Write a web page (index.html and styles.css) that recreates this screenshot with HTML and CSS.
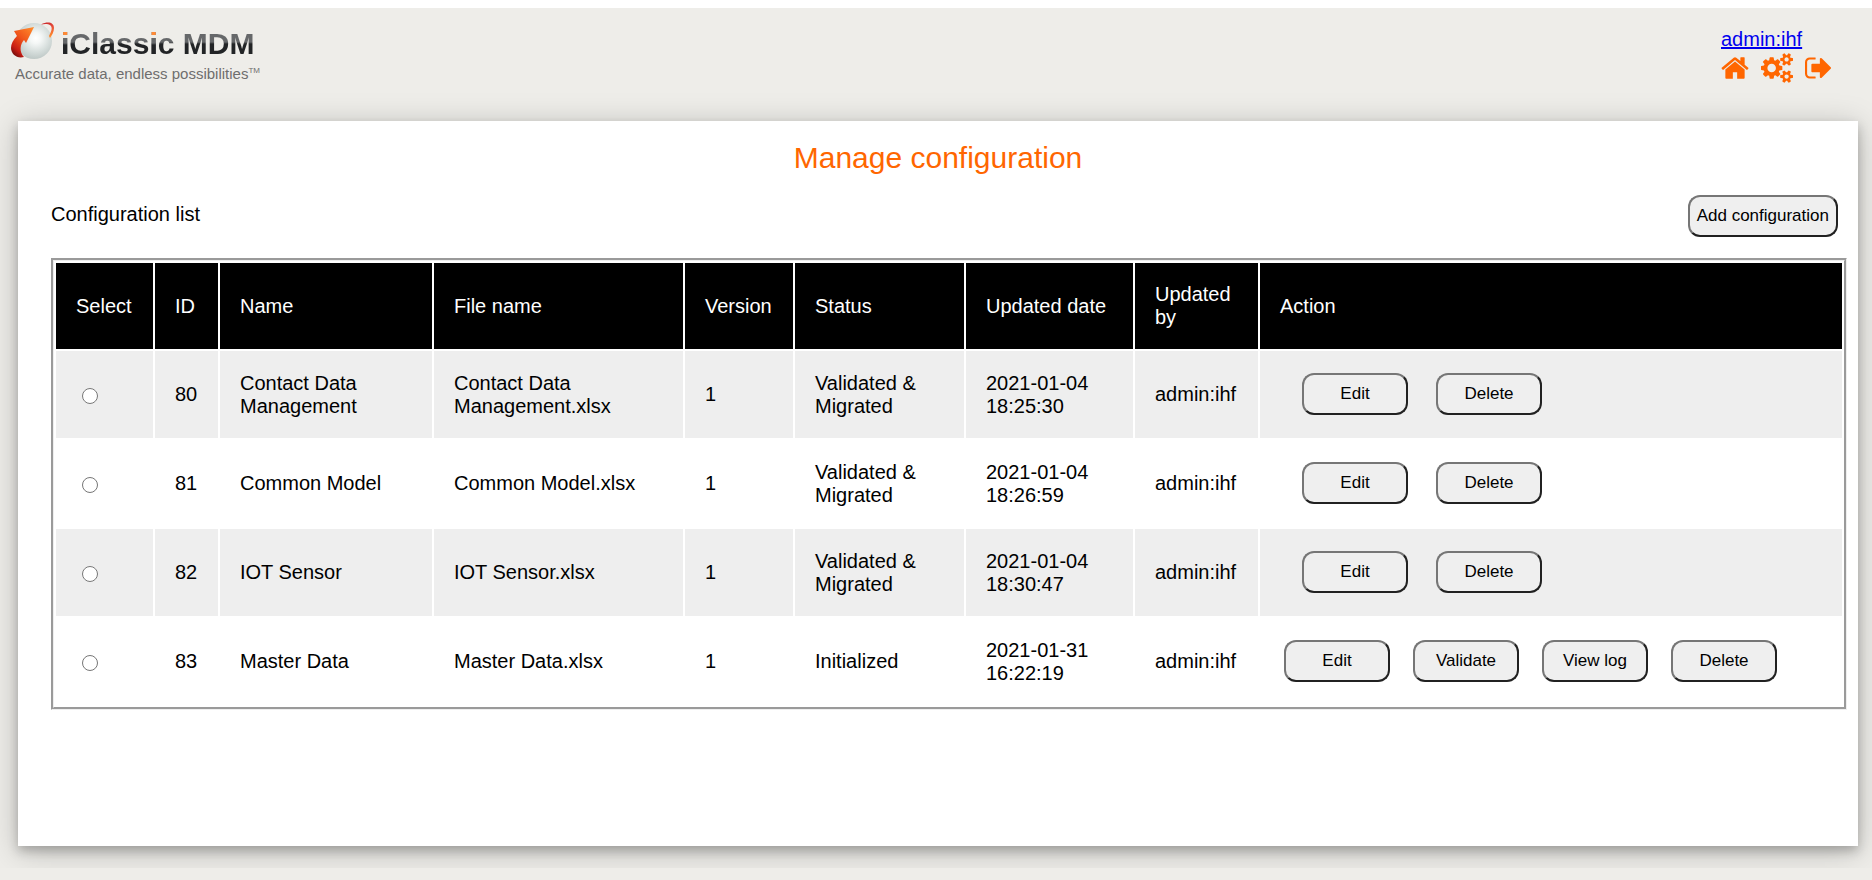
FILE: index.html
```html
<!DOCTYPE html>
<html lang="en">
<head>
<meta charset="utf-8">
<title>iClassic MDM - Manage configuration</title>
<link rel="stylesheet" href="styles.css">
</head>
<body>
<div class="page">
  <header class="topbar">
    <div class="brand">
      <div class="brand-main">
        <svg class="brand-globe" viewBox="0 0 44 40" aria-hidden="true">
          <defs>
            <radialGradient id="ball" cx="0.55" cy="0.42" r="0.6">
              <stop offset="0" stop-color="#ffffff"/>
              <stop offset="0.25" stop-color="#f4f7f6"/>
              <stop offset="0.65" stop-color="#d5dddb"/>
              <stop offset="1" stop-color="#bcc6c4"/>
            </radialGradient>
            <linearGradient id="arrow" x1="0.9" y1="0" x2="0.2" y2="1">
              <stop offset="0" stop-color="#ff8a2a"/>
              <stop offset="0.45" stop-color="#f0541a"/>
              <stop offset="0.8" stop-color="#c81d14"/>
              <stop offset="1" stop-color="#6e0c0c"/>
            </linearGradient>
            <linearGradient id="tail" x1="0" y1="0" x2="0.3" y2="1">
              <stop offset="0" stop-color="#c5202a"/>
              <stop offset="0.5" stop-color="#e8503a"/>
              <stop offset="1" stop-color="#ff8a2a"/>
            </linearGradient>
          </defs>
          <circle cx="23" cy="21" r="18" fill="url(#ball)"/>
          <path d="M30 4.500C37 1 43 2.500 43 8C43 12 41 15 39 18L38 16C40 12 42 8 39.500 5.500C37 3.500 33 4 30 4.500Z" fill="url(#tail)"/>
          <path d="M23 7L15 23L13 20C9 24 8 32 13 37C6 39 0 34 0 28C0 24 2 20 6 16L3 11Z" fill="url(#arrow)"/>
        </svg>
        <span class="brand-name"><span class="dotted">i</span>Class<span class="dotted">i</span>c MDM</span>
      </div>
      <div class="brand-tagline">Accurate data, endless possibilities<sup class="brand-tm">TM</sup></div>
    </div>
    <nav class="user-nav" aria-label="User">
      <a class="user-link" href="#">admin:ihf</a>
      <div class="user-icons">
        <a class="icon-link" href="#" aria-label="Home"><svg class="icon icon-home" viewBox="89 0 1614 1792"><path d="M1472 992v480q0 26-19 45t-45 19h-384v-384h-256v384h-384q-26 0-45-19t-19-45v-480q0-1 .5-3t.5-3l575-474 575 474q1 2 1 6zm223-69l-62 74q-8 9-21 11h-3q-13 0-21-7l-692-577-692 577q-12 8-24 7-13-2-21-11l-62-74q-8-10-7-23.500t11-21.500l719-599q32-26 76-26t76 26l244 204v-195q0-14 9-23t23-9h192q14 0 23 9t9 23v408l219 182q10 8 11 21.500t-7 23.500z"/></svg></a>
        <a class="icon-link" href="#" aria-label="Settings"><svg class="icon icon-cogs" viewBox="-64 0 1920 1792"><path d="M832 896q0-106-75-181t-181-75-181 75-75 181 75 181 181 75 181-75 75-181zm768 512q0-52-38-90t-90-38-90 38-38 90q0 53 37.500 90.500t90.500 37.500 90.500-37.500 37.500-90.500zm0-1024q0-52-38-90t-90-38-90 38-38 90q0 53 37.500 90.500t90.500 37.500 90.500-37.500 37.500-90.500zm-384 421v185q0 10-7 19.500t-16 10.500l-155 24q-11 35-32 76 34 48 90 115 7 11 7 20 0 12-7 19-23 30-82.500 89.500t-78.500 59.500q-11 0-21-7l-115-90q-37 19-77 31-11 108-23 155-7 24-30 24h-186q-11 0-20-7.500t-10-17.500l-23-153q-34-10-75-31l-118 89q-7 7-20 7-11 0-21-8-144-133-144-160 0-9 7-19 10-14 41-53t47-61q-23-44-35-82l-152-24q-10-1-17-9.500t-7-19.500v-185q0-10 7-19.500t16-10.500l155-24q11-35 32-76-34-48-90-115-7-11-7-20 0-12 7-20 22-30 82-89t79-59q11 0 21 7l115 90q34-18 77-32 11-108 23-154 7-24 30-24h186q11 0 20 7.500t10 17.500l23 153q34 10 75 31l118-89q8-7 20-7 11 0 21 8 144 133 144 160 0 8-7 19-12 16-42 54t-45 60q23 48 34 82l152 23q10 2 17 10.500t7 19.500zm640 533v140q0 16-149 31-12 27-30 52 51 113 51 138 0 4-4 7-122 71-124 71-8 0-46-47t-52-68q-20 2-30 2t-30-2q-14 21-52 68t-46 47q-2 0-124-71-4-3-4-7 0-25 51-138-18-25-30-52-149-15-149-31v-140q0-16 149-31 13-29 30-52-51-113-51-138 0-4 4-7 4-2 35-20t59-34 30-16q8 0 46 46.500t52 67.500q20-2 30-2t30 2q51-71 92-112l6-2q4 0 124 70 4 3 4 7 0 25-51 138 17 23 30 52 149 15 149 31zm0-1024v140q0 16-149 31-12 27-30 52 51 113 51 138 0 4-4 7-122 71-124 71-8 0-46-47t-52-68q-20 2-30 2t-30-2q-14 21-52 68t-46 47q-2 0-124-71-4-3-4-7 0-25 51-138-18-25-30-52-149-15-149-31v-140q0-16 149-31 13-29 30-52-51-113-51-138 0-4 4-7 4-2 35-20t59-34 30-16q8 0 46 46.500t52 67.500q20-2 30-2t30 2q51-71 92-112l6-2q4 0 124 70 4 3 4 7 0 25-51 138 17 23 30 52 149 15 149 31z"/></svg></a>
        <a class="icon-link" href="#" aria-label="Sign out"><svg class="icon icon-out" viewBox="64 0 1568 1792"><path d="M704 1440q0 4 1 20t.5 26.500-3 23.500-10 19.500-20.500 6.500h-320q-119 0-203.500-84.500t-84.500-203.500v-704q0-119 84.500-203.500t203.500-84.500h320q13 0 22.500 9.500t9.500 22.500q0 4 1 20t.5 26.500-3 23.500-10 19.500-20.500 6.500h-320q-66 0-113 47t-47 113v704q0 66 47 113t113 47h312l11.500 1 11.500 3 8 5.500 7 9 2 13.500zm928-544q0 26-19 45l-544 544q-19 19-45 19t-45-19-19-45v-288h-448q-26 0-45-19t-19-45v-384q0-26 19-45t45-19h448v-288q0-26 19-45t45-19 45 19l544 544q19 19 19 45z"/></svg></a>
      </div>
    </nav>
  </header>
  <main class="card">
    <h1 class="title">Manage configuration</h1>
    <div class="list-head">
      <h2 class="list-title" id="list-title">Configuration list</h2>
      <button class="btn" type="button">Add configuration</button>
    </div>
    <table class="grid" aria-labelledby="list-title">
      <colgroup>
        <col class="col-select"><col class="col-id"><col class="col-name"><col class="col-file"><col class="col-version"><col class="col-status"><col class="col-date"><col class="col-by"><col>
      </colgroup>
      <thead>
        <tr><th>Select</th><th>ID</th><th>Name</th><th>File name</th><th>Version</th><th>Status</th><th>Updated date</th><th>Updated by</th><th>Action</th></tr>
      </thead>
      <tbody>
        <tr>
          <td><input class="pick" type="radio" name="config" aria-label="Select Contact Data Management"></td>
          <td>80</td><td>Contact Data Management</td><td>Contact Data Management.xlsx</td><td>1</td><td>Validated &amp; Migrated</td><td>2021-01-04 18:25:30</td><td>admin:ihf</td>
          <td><div class="actions"><button class="btn btn-action" type="button">Edit</button><button class="btn btn-action" type="button">Delete</button></div></td>
        </tr>
        <tr>
          <td><input class="pick" type="radio" name="config" aria-label="Select Common Model"></td>
          <td>81</td><td>Common Model</td><td>Common Model.xlsx</td><td>1</td><td>Validated &amp; Migrated</td><td>2021-01-04 18:26:59</td><td>admin:ihf</td>
          <td><div class="actions"><button class="btn btn-action" type="button">Edit</button><button class="btn btn-action" type="button">Delete</button></div></td>
        </tr>
        <tr>
          <td><input class="pick" type="radio" name="config" aria-label="Select IOT Sensor"></td>
          <td>82</td><td>IOT Sensor</td><td>IOT Sensor.xlsx</td><td>1</td><td>Validated &amp; Migrated</td><td>2021-01-04 18:30:47</td><td>admin:ihf</td>
          <td><div class="actions"><button class="btn btn-action" type="button">Edit</button><button class="btn btn-action" type="button">Delete</button></div></td>
        </tr>
        <tr>
          <td><input class="pick" type="radio" name="config" aria-label="Select Master Data"></td>
          <td>83</td><td>Master Data</td><td>Master Data.xlsx</td><td>1</td><td>Initialized</td><td>2021-01-31 16:22:19</td><td>admin:ihf</td>
          <td><div class="actions actions-full"><button class="btn btn-action" type="button">Edit</button><button class="btn btn-action" type="button">Validate</button><button class="btn btn-action" type="button">View log</button><button class="btn btn-action" type="button">Delete</button></div></td>
        </tr>
      </tbody>
    </table>
  </main>
</div>
</body>
</html>
```
FILE: styles.css
```css
* {
  box-sizing: border-box;
}

html {
  background: #ffffff;
}

body {
  margin: 0;
  padding-top: 8px;
  min-height: 100vh;
  display: flex;
  flex-direction: column;
  background: #eeede9 content-box;
  color: #000000;
  font: 20px/23px "Liberation Sans", Arial, sans-serif;
}

.page {
  flex: 1;
  display: flex;
  flex-direction: column;
  margin-bottom: 12px;
  padding: 12px 14px 22px 18px;
  overflow: hidden;
}

.topbar {
  display: flex;
  justify-content: space-between;
  height: 101px;
  padding-right: 27px;
}

.brand {
  margin-left: -7px;
}

.brand-main {
  display: flex;
  gap: 6px;
  height: 43px;
}

.brand-globe {
  width: 44px;
  height: 40px;
}

.brand-name {
  font: bold 30px/47px "Liberation Sans", Arial, sans-serif;
  color: transparent;
  background: linear-gradient(#66686a 22px, #222426 24px);
  background-clip: text;
  white-space: nowrap;
}

.dotted {
  background: linear-gradient(#ff8a35 9px, #66686a 10px, #66686a 16px, #222426 18px);
  background-clip: text;
}

.brand-tagline {
  padding-left: 4px;
  font: 15px/22px "Liberation Sans", Arial, sans-serif;
  color: #6e6e6e;
  white-space: nowrap;
}

.brand-tm {
  font-size: 8px;
  line-height: 1;
}

.user-nav {
  display: flex;
  flex-direction: column;
  align-items: flex-start;
  padding-top: 8px;
}

.user-link {
  color: #0000ee;
}

.user-icons {
  display: flex;
  gap: 12px;
  padding-top: 2px;
}

.icon-link {
  display: flex;
}

.icon {
  height: 30px;
  fill: #ff6600;
}

.icon-home {
  width: 28px;
}

.icon-cogs {
  width: 32px;
}

.icon-out {
  width: 26px;
}

.card {
  flex: 1;
  padding: 20px 11px 20px 33px;
  background: #ffffff;
  box-shadow: 0 5px 10px rgba(0, 0, 0, 0.22), 0 5px 30px rgba(0, 0, 0, 0.22);
}

.title {
  margin: 0 22px 0 0;
  color: #ff6600;
  font-size: 30px;
  line-height: 34px;
  font-weight: normal;
  text-align: center;
}

.list-head {
  display: flex;
  justify-content: space-between;
  align-items: center;
  padding: 20px 9px 21px 0;
}

.list-title {
  margin: 0;
  padding-bottom: 4px;
  font-size: 20px;
  font-weight: normal;
}

.btn {
  height: 42px;
  padding: 0 7px;
  border: 2px solid;
  border-color: #767676 #212121 #212121 #767676;
  border-radius: 12px;
  background: #efefef;
  color: #000000;
  font: 17px/20px "Liberation Sans", Arial, sans-serif;
}

.grid {
  width: 100%;
  table-layout: fixed;
  border: 3px groove #eeeeee;
  border-collapse: separate;
  border-spacing: 2px;
}

.col-select {
  width: 97px;
}

.col-id {
  width: 63px;
}

.col-name {
  width: 212px;
}

.col-file {
  width: 249px;
}

.col-version {
  width: 108px;
}

.col-status {
  width: 169px;
}

.col-date {
  width: 167px;
}

.col-by {
  width: 123px;
}

.grid th,
.grid td {
  padding: 20px;
  text-align: left;
  vertical-align: middle;
  font-weight: normal;
}

.grid th {
  background: #000000;
  color: #ffffff;
}

.grid tbody tr:nth-child(odd) td {
  background: #eeeeee;
}

.pick {
  display: block;
  width: 16px;
  height: 16px;
  margin: 3px 4px 0 6px;
}

.actions {
  display: flex;
  gap: 28px;
  padding: 2px 0 3px 22px;
}

.actions-full {
  gap: 23px;
  padding-left: 4px;
}

.btn-action {
  width: 106px;
}
```
